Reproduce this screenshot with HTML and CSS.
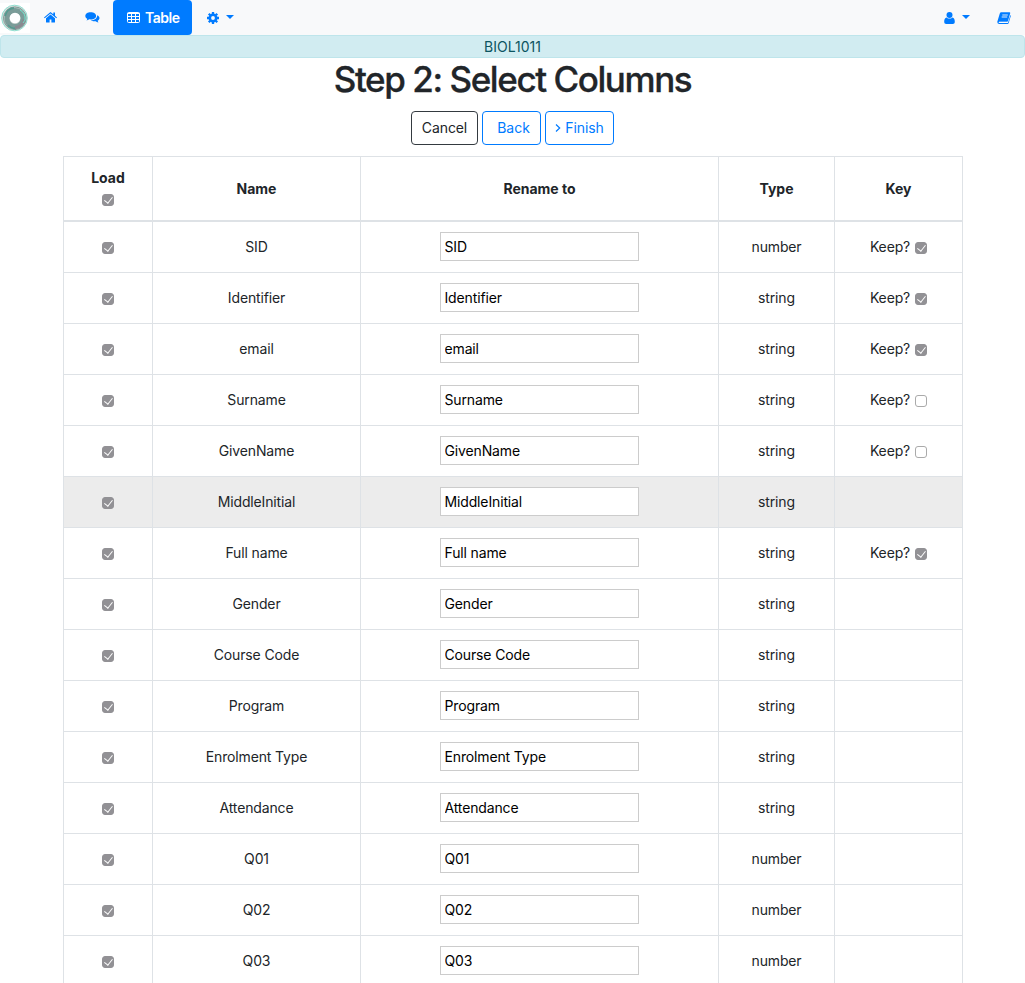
FILE: index.html
```html
<!DOCTYPE html>
<html lang="en">
<head>
<meta charset="utf-8">
<title>Step 2: Select Columns</title>
<link rel="stylesheet" href="styles.css">
</head>
<body>
<nav class="navbar">
  <a class="logo"><svg width="30" height="30" viewBox="0 0 30 30"><rect width="30" height="30" fill="#fff"/><circle cx="14.5" cy="15" r="12.8" fill="#d9dedd" stroke="#8fe0d0" stroke-width="1"/><circle cx="14.8" cy="15.2" r="11.3" fill="#bfc8c6" stroke="#7f9b96" stroke-width="1"/><circle cx="15" cy="15.5" r="8" fill="none" stroke="#7b9c98" stroke-width="5"/><path d="M5 13a10 10 0 0 1 9-8M8 22a10 10 0 0 0 8 3.500" fill="none" stroke="#549a8f" stroke-width="1.800"/><path d="M15 24.500a9 9 0 0 0 9-8" fill="none" stroke="#8b8990" stroke-width="3"/><path d="M20 7a10 10 0 0 1 5 10l-2 3" fill="none" stroke="#6de0c8" stroke-width="1"/><circle cx="15" cy="15" r="5.300" fill="#fff"/></svg></a>
  <a class="nav-icon home"><svg width="13" height="11" viewBox="0 0 13 11" fill="#007bff"><path d="M6.500 2.500 2 6.200V10q0 .6.600.6h3V7.500h1.800v3.100h3q.6 0 .6-.6V6.200z"/><path d="M6.500 0 0 5.400l.7.800L6.500 1.500l5.800 4.700.7-.8-2-1.700V.6H9.300v1.700z"/></svg></a>
  <a class="nav-icon chat"><svg width="15" height="12" viewBox="0 0 15 12" fill="#007bff"><path d="M5.700.3C2.600.3.300 1.900.300 4c0 1.200.8 2.200 2 2.900-.2.700-.6 1.100-1 1.600 1.200-.1 2.200-.6 3-1.200.5.100.9.100 1.400.1 3.100 0 5.400-1.500 5.400-3.500S8.800.300 5.700.300z"/><path d="M12.200 3.300c1.400.6 2.300 1.600 2.300 2.800 0 1.100-.7 2.100-1.900 2.700.2.700.6 1.100 1 1.600-1.300-.1-2.300-.6-3-1.200-1.800.3-3.700-.1-4.800-.9 3.700 0 6.600-2 6.400-5z"/></svg></a>
  <a class="nav-active"><svg width="13" height="11" viewBox="0 0 13 11" fill="none" stroke="#fff"><rect x=".5" y=".5" width="12" height="10" rx="1"/><path d="M.5 1.500h12M.5 4.500h12M.5 7.500h12M4.500 1v9.500M8.500 1v9.500"/></svg><span>Table</span></a>
  <a class="nav-icon gear"><svg width="12" height="12" viewBox="0 0 12 12"><circle cx="6" cy="6" r="3.200" fill="none" stroke="#007bff" stroke-width="2.600"/><path d="M6 0v2M6 10v2M0 6h2M10 6h2M1.800 1.800l1.400 1.400M8.800 8.800l1.400 1.400M1.800 10.200l1.400-1.400M8.800 3.200l1.400-1.400" stroke="#007bff" stroke-width="2.300"/></svg><i class="caret"></i></a>
  <span class="spacer"></span>
  <a class="nav-icon user"><svg width="11" height="12" viewBox="0 0 11 12" fill="#007bff"><circle cx="5.500" cy="3" r="3"/><path d="M2.600 5.400C.8 5.700.200 7.700.200 9.800.200 11.200 1 12 2.200 12h6.600c1.200 0 2-.8 2-2.200 0-2.100-.6-4.100-2.400-4.400C6.700 7 4.300 7 2.600 5.400z"/></svg><i class="caret"></i></a>
  <a class="nav-icon book"><svg width="14" height="12" viewBox="0 0 14 12"><path d="M4.200.3h8.300q.9 0 .7.900L11 9q-.2.700-1 .7H2.300q-.8 0-.7.600t.9.700h7.800q.6 0 .8-.5l2.300-7.500q.6.300.4 1L11.700 11q-.3.900-1.200.9H2Q.1 11.600.3 9.700L2.800 1.500Q3.200.3 4.200.3z" fill="#007bff"/><path d="M5.300 3h5.500M4.700 5h5.500" stroke="#f8f9fa" stroke-width=".9"/><path d="M2 10.400h8.600" stroke="#f8f9fa" stroke-width=".9"/></svg></a>
</nav>
<div class="context">BIOL1011</div>
<h1 class="title">Step 2: Select Columns</h1>
<div class="actions">
  <a class="btn cancel">Cancel</a>
  <a class="btn back">Back</a>
  <a class="btn finish"><svg width="6" height="8" viewBox="0 0 6 8" fill="none" stroke="#007bff" stroke-width="1.200"><path d="M1 .5 4.700 4 1 7.500"/></svg><span>Finish</span></a>
</div>
<table class="columns">
  <colgroup><col class="c-load"><col class="c-name"><col class="c-rename"><col class="c-type"><col class="c-key"></colgroup>
  <thead>
    <tr><th><div class="load"><span>Load</span><input class="check" type="checkbox" checked></div></th><th>Name</th><th>Rename to</th><th>Type</th><th>Key</th></tr>
  </thead>
  <tbody>
    <tr><td><input class="check" type="checkbox" checked></td><td>SID</td><td><input class="field" type="text" value="SID"></td><td>number</td><td><label class="keep">Keep? <input class="check" type="checkbox" checked></label></td></tr>
    <tr><td><input class="check" type="checkbox" checked></td><td>Identifier</td><td><input class="field" type="text" value="Identifier"></td><td>string</td><td><label class="keep">Keep? <input class="check" type="checkbox" checked></label></td></tr>
    <tr><td><input class="check" type="checkbox" checked></td><td>email</td><td><input class="field" type="text" value="email"></td><td>string</td><td><label class="keep">Keep? <input class="check" type="checkbox" checked></label></td></tr>
    <tr><td><input class="check" type="checkbox" checked></td><td>Surname</td><td><input class="field" type="text" value="Surname"></td><td>string</td><td><label class="keep">Keep? <input class="check" type="checkbox"></label></td></tr>
    <tr><td><input class="check" type="checkbox" checked></td><td>GivenName</td><td><input class="field" type="text" value="GivenName"></td><td>string</td><td><label class="keep">Keep? <input class="check" type="checkbox"></label></td></tr>
    <tr class="hovered"><td><input class="check" type="checkbox" checked></td><td>MiddleInitial</td><td><input class="field" type="text" value="MiddleInitial"></td><td>string</td><td></td></tr>
    <tr><td><input class="check" type="checkbox" checked></td><td>Full name</td><td><input class="field" type="text" value="Full name"></td><td>string</td><td><label class="keep">Keep? <input class="check" type="checkbox" checked></label></td></tr>
    <tr><td><input class="check" type="checkbox" checked></td><td>Gender</td><td><input class="field" type="text" value="Gender"></td><td>string</td><td></td></tr>
    <tr><td><input class="check" type="checkbox" checked></td><td>Course Code</td><td><input class="field" type="text" value="Course Code"></td><td>string</td><td></td></tr>
    <tr><td><input class="check" type="checkbox" checked></td><td>Program</td><td><input class="field" type="text" value="Program"></td><td>string</td><td></td></tr>
    <tr><td><input class="check" type="checkbox" checked></td><td>Enrolment Type</td><td><input class="field" type="text" value="Enrolment Type"></td><td>string</td><td></td></tr>
    <tr><td><input class="check" type="checkbox" checked></td><td>Attendance</td><td><input class="field" type="text" value="Attendance"></td><td>string</td><td></td></tr>
    <tr><td><input class="check" type="checkbox" checked></td><td>Q01</td><td><input class="field" type="text" value="Q01"></td><td>number</td><td></td></tr>
    <tr><td><input class="check" type="checkbox" checked></td><td>Q02</td><td><input class="field" type="text" value="Q02"></td><td>number</td><td></td></tr>
    <tr><td><input class="check" type="checkbox" checked></td><td>Q03</td><td><input class="field" type="text" value="Q03"></td><td>number</td><td></td></tr>
  </tbody>
</table>
</body>
</html>
```
FILE: styles.css
```css
*, *::after { box-sizing: border-box; }
body {
  margin: 0;
  height: 983px;
  overflow: hidden;
  background: #fff;
  color: #212529;
  font: 14px/21px Inter, "Liberation Sans", sans-serif;
}
svg { display: block; flex: none; }
.navbar { display: flex; align-items: center; height: 35px; background: #f8f9fa; }
.logo { padding-top: 1px; }
.nav-icon { display: flex; align-items: center; }
.home { margin-left: 14px; }
.chat { margin-left: 28px; }
.nav-active {
  display: flex;
  align-items: center;
  gap: 5px;
  width: 79px;
  height: 35px;
  margin-left: 13px;
  padding-left: 14px;
  border-radius: 4px;
  background: #007bff;
  color: #fff;
  font-weight: 600;
  letter-spacing: -.5px;
}
.gear { margin-left: 15px; padding-top: 1px; }
.caret {
  margin: -2px 0 0 7px;
  border: 4px solid transparent;
  border-top-color: #007bff;
  border-bottom: 0;
}
.spacer { flex: 1; }
.book { margin: 0 14px 0 27px; }
.context {
  height: 23px;
  border: 1px solid #bee5eb;
  border-radius: 4px;
  background: #d1ecf1;
  color: #0c5460;
  text-align: center;
}
.title {
  margin: 0;
  height: 53px;
  text-align: center;
  font-size: 35px;
  font-weight: 500;
  line-height: 43px;
  letter-spacing: -1.43px;
  -webkit-text-stroke: .3px #212529;
}
.actions { display: flex; justify-content: center; gap: 4px; height: 45px; }
.btn {
  display: flex;
  align-items: center;
  justify-content: center;
  height: 34px;
  padding-bottom: 1px;
  border: 1px solid #007bff;
  border-radius: 4px;
  color: #007bff;
}
.cancel { width: 67px; border-color: #343a40; color: #212529; letter-spacing: -.1px; }
.back { width: 59px; padding-left: 4px; }
.finish { width: 69px; gap: 4px; margin-left: 0; letter-spacing: -.1px; }
.columns {
  width: 900px;
  margin-left: 63px;
  table-layout: fixed;
  border-collapse: separate;
  border-spacing: 0;
  text-align: center;
}
.c-load { width: 89px; }
.c-name { width: 208px; }
.c-rename { width: 358px; }
.c-type { width: 116px; }
.c-key { width: 129px; }
th, td {
  padding: 0;
  border-left: 1px solid #dee2e6;
  border-bottom: 1px solid #dee2e6;
  vertical-align: middle;
}
th:last-child, td:last-child { border-right: 1px solid #dee2e6; }
th { height: 66px; border-top: 1px solid #dee2e6; border-bottom-width: 2px; font-weight: 650; }
td { height: 51px; padding-bottom: 1px; letter-spacing: -.14px; }
.hovered { background: #ececec; }
.load { display: flex; flex-direction: column; align-items: center; gap: 6px; padding-bottom: 5px; }
.check {
  appearance: none;
  display: inline-block;
  position: relative;
  width: 12px;
  height: 12px;
  margin: 0;
  border: 1px solid #aaa;
  border-radius: 3px;
  background: #fff;
  vertical-align: -2px;
}
.check:checked { border-color: #929195; background: #929195; }
.check:checked::after {
  content: "";
  position: absolute;
  left: 3px;
  top: 0;
  width: 4.5px;
  height: 8px;
  border: solid #fff;
  border-width: 0 1.5px 1.5px 0;
  transform: rotate(38deg);
}
.keep { display: flex; align-items: center; justify-content: center; gap: 5px; }
.keep .check { margin-top: 3px; }
.field {
  display: block;
  width: 199px;
  height: 29px;
  margin: 0 auto;
  padding: 0 3.5px;
  border: 1px solid #ccc;
  background: #fff;
  color: #000;
  font: inherit;
  letter-spacing: -.14px;
}
```
